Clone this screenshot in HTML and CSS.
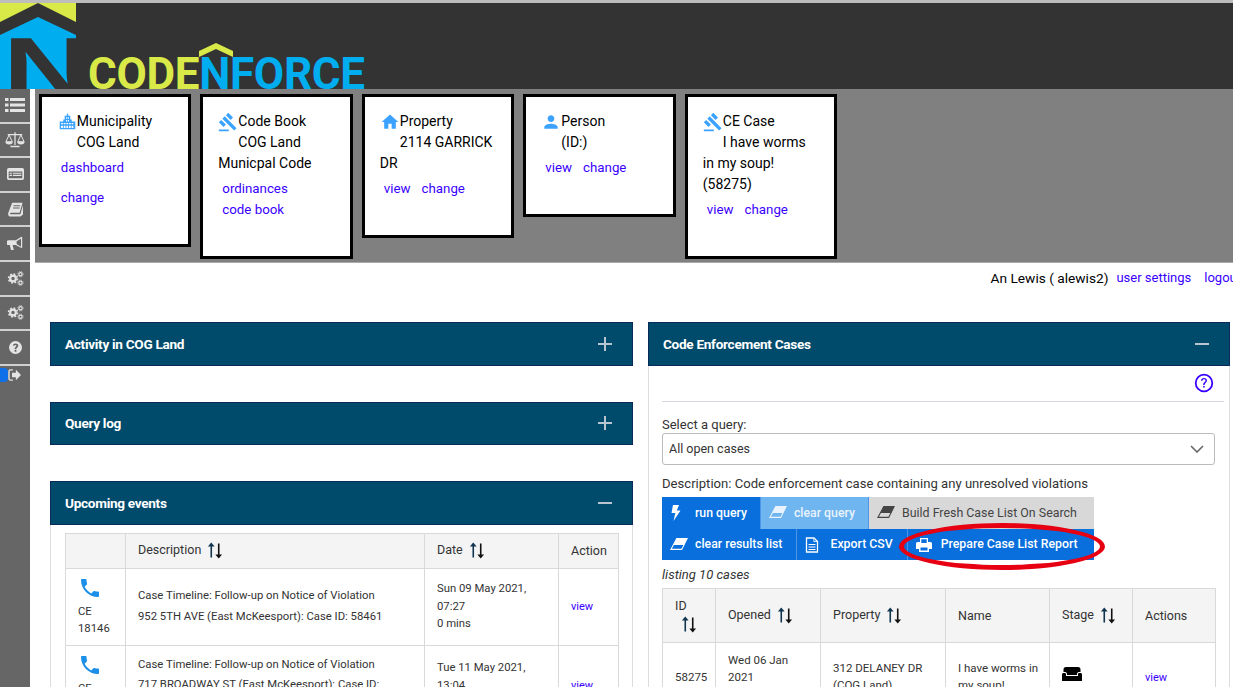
FILE: index.html
```html
<!DOCTYPE html>
<html lang="en">
  <head>
    <meta charset="UTF-8" />
    <title>CodeNForce</title>
    <link rel="stylesheet" href="styles.css">
  </head>
  <body>
    <svg class="icon-defs" width="0" height="0">
      <symbol id="i-gavel" viewBox="0 0 24 24"><path d="M1 21h12v2H1zM5.245 8.070l2.830-2.827 14.140 14.142-2.828 2.828zM12.317 1l5.657 5.656-2.830 2.830-5.654-5.660zM3.825 9.485l5.657 5.657-2.828 2.828-5.657-5.657z"/></symbol>
      <symbol id="i-home" viewBox="0 0 24 24"><path d="M10 20v-6h4v6h5v-8h3L12 3 2 12h3v8z"/></symbol>
      <symbol id="i-person" viewBox="0 0 24 24"><path d="M12 12c2.210 0 4-1.790 4-4s-1.790-4-4-4-4 1.790-4 4 1.790 4 4 4zm0 2c-2.670 0-8 1.340-8 4v2h16v-2c0-2.660-5.330-4-8-4z"/></symbol>
      <symbol id="i-city" viewBox="0 0 24 24"><path fill-rule="evenodd" d="M11 1h2v3h3v5h2v3h5v11H1V12h5V9h2V4h3zM10 6v2h1.500V6zm2.500 0v2H14V6zM10 10v2h1.500v-2zm2.500 0v2H14v-2zM3 14v2h2.500v-2zm3.700 0v2h2.500v-2zm3.700 0v2h2.500v-2zm3.700 0v2h2.500v-2zm3.700 0v2h2.500v-2zM3 18v3h2.500v-3zm3.700 0v3h2.500v-3zm3.700 0v3h2.500v-3zm3.700 0v3h2.500v-3zm3.700 0v3h2.500v-3z"/></symbol>
      <symbol id="i-phone" viewBox="0 0 24 24"><path d="M6.620 10.790c1.440 2.830 3.760 5.140 6.590 6.590l2.200-2.200c.27-.27.67-.36 1.020-.24 1.120.37 2.330.57 3.570.57.55 0 1 .45 1 1V20c0 .55-.45 1-1 1-9.390 0-17-7.610-17-17 0-.55.45-1 1-1h3.500c.55 0 1 .45 1 1 0 1.250.2 2.450.57 3.570.11.35.03.74-.25 1.020l-2.200 2.200z"/></symbol>
      <symbol id="i-sort" viewBox="0 0 18 20"><path fill="#12364f" d="M4.800 1 1 5.600h2.900V18h1.800V5.600h2.900z"/><path fill="#111" d="M13.200 19 17 14.400h-2.900V2h-1.800v12.400H9.400z"/></symbol>
      <symbol id="i-eraser" viewBox="0 0 20 14"><path d="M7.500 1h11.500l-6 12H1z" fill="none" stroke="currentColor" stroke-width="1.200"/><path d="M7.500 1h11.500l-3.500 7H4z"/></symbol>
      <symbol id="i-bolt" viewBox="0 0 12 16"><path d="M3 0h6L6.800 5.500H10.500L3.500 16l1.800-8H1.500z"/></symbol>
      <symbol id="i-file" viewBox="0 0 14 16"><path d="M1.500 1h7.500l3.500 3.500V15h-11z" fill="none" stroke="currentColor" stroke-width="1.300"/><path d="M3.500 7h7v1h-7zM3.500 9.500h7v1h-7zM3.500 12h7v1h-7zM8.500 1.500v3.500h3.500v-.8H9.300V1.500z"/></symbol>
      <symbol id="i-print" viewBox="0 0 16 16"><path fill-rule="evenodd" d="M4 1h8v4h2.500A1.500 1.500 0 0 1 16 6.500V12h-3v3H3v-3H0V6.500A1.500 1.500 0 0 1 1.500 5H4zm1.300 1.300V6h5.400V2.300zM4.500 10.500v3h7v-3z"/></symbol>
      <symbol id="i-cogs" viewBox="0 0 24 24"><circle cx="8.500" cy="12" r="4" fill="none" stroke="currentColor" stroke-width="3"/><circle cx="8.500" cy="12" r="6.300" fill="none" stroke="currentColor" stroke-width="2.200" stroke-dasharray="2.500 2.450"/><circle cx="19" cy="6" r="2.300" fill="none" stroke="currentColor" stroke-width="1.600"/><circle cx="19" cy="6" r="3.800" fill="none" stroke="currentColor" stroke-width="1.200" stroke-dasharray="1.500 1.480"/><circle cx="19" cy="18" r="2.300" fill="none" stroke="currentColor" stroke-width="1.600"/><circle cx="19" cy="18" r="3.800" fill="none" stroke="currentColor" stroke-width="1.200" stroke-dasharray="1.500 1.480"/></symbol>
    </svg>

    <div class="page">
      <header class="topbar">
        <svg class="logo-mark" viewBox="0 0 76 86" width="76" height="86">
          <rect width="76" height="86" fill="#333" />
          <path d="M0 0h76v19L38 0 0 19z" fill="#d9ea48" />
          <path d="M38 14 76 32v54H0V32z" fill="#00adef" />
          <text class="logo-n" transform="translate(3 94) scale(1.42 1)">N</text>
        </svg>
        <div class="logo-word">
          <span class="logo-code">CODE</span><span class="logo-force">NFORCE</span>
          <svg class="logo-roof" viewBox="0 0 36 16" width="36" height="16">
            <path d="M1 15V9L18 1l17 8v6L18 7z" fill="#d9ea48" />
          </svg>
        </div>
      </header>

      <div class="workspace">
        <nav class="sidenav">
          <a class="nav-item"><svg width="20" height="16" viewBox="0 0 20 16"><path d="M0 1h3.500v3H0zM5 1h15v3H5zM0 6.500h3.500v3H0zM5 6.500h15v3H5zM0 12h3.500v3H0zM5 12h15v3H5z"/></svg></a>
          <a class="nav-item"><svg width="20" height="17" viewBox="0 0 22 18"><path d="M10.300 1h1.400v14h-1.400zM3 3h16v1.300H3zM6 16h10v1.500H6z"/><path d="M4.500 4 1 11.500h7zM17.500 4 14 11.500h7z" fill="none" stroke="currentColor" stroke-width="1.100"/><path d="M.5 11.500h8a4 3 0 0 1-8 0zM13.500 11.500h8a4 3 0 0 1-8 0z"/></svg></a>
          <a class="nav-item"><svg width="17" height="14" viewBox="0 0 20 16"><path fill-rule="evenodd" d="M2 1h16a2 2 0 0 1 2 2v10a2 2 0 0 1-2 2H2a2 2 0 0 1-2-2V3a2 2 0 0 1 2-2zm0 4v8h16V5zM3 6.500h3v1.300H3zM7 6.500h10v1.300H7zM3 9h3v1.300H3zM7 9h10v1.300H7z"/></svg></a>
          <a class="nav-item"><svg width="15" height="15" viewBox="0 0 18 18"><path fill-rule="evenodd" d="M5 1h12.500l-3.600 12H3.500c-1.200 0-1.500 1.700-.2 1.700h11.500L18 4v11l-3 2.500H3C.5 17.500-.4 15 .5 12.500zM6.500 4v1.200h8V4zM6 6.500v1.200h8V6.500z"/></svg></a>
          <a class="nav-item"><svg width="16" height="15" viewBox="0 0 20 18"><path fill-rule="evenodd" d="M19 1v13l-1 .5L11 11H7l1.500 6H5L3.500 11H2a2 2 0 0 1 0-6h9l7-4.500zM17.500 3 12 6.300v3.400l5.500 3.300z"/></svg></a>
          <a class="nav-item"><svg width="17" height="17"><use href="#i-cogs" /></svg></a>
          <a class="nav-item"><svg width="17" height="17"><use href="#i-cogs" /></svg></a>
          <a class="nav-item"><svg width="13" height="13" viewBox="0 0 16 16"><path fill-rule="evenodd" d="M8 0a8 8 0 1 1 0 16A8 8 0 0 1 8 0zM6.900 11.200v2h2.200v-2zM8 3C6.200 3 5 4 4.700 5.400l1.900.5C6.800 5.200 7.200 4.800 8 4.800c.7 0 1.200.4 1.200 1 0 1.200-2.300 1.400-2.300 3.700v.5h2.200v-.4c0-1.300 2.300-1.700 2.300-3.900C11.400 4.100 9.900 3 8 3z"/></svg></a>
          <a class="nav-item nav-item-last">
            <span class="nav-pill"></span>
            <svg width="14" height="12" viewBox="0 0 16 14"><path d="M5.500 1H3a2 2 0 0 0-2 2v8a2 2 0 0 0 2 2h2.500" fill="none" stroke="currentColor" stroke-width="1.600"/><path d="M4.500 4.500H9V1l6 6-6 6V9.500H4.500z"/></svg>
          </a>
        </nav>

        <main class="content">
          <section class="context-band">
            <div class="ctx-card">
              <p class="ctx-title"><svg class="ctx-icon ctx-icon-city" width="17" height="17"><use href="#i-city" /></svg>Municipality</p>
              <p class="ctx-name">COG Land</p>
              <a class="ctx-link ctx-link-first" href="#">dashboard</a>
              <a class="ctx-link ctx-link-spaced" href="#">change</a>
            </div>
            <div class="ctx-card">
              <p class="ctx-title"><svg class="ctx-icon" width="20" height="20"><use href="#i-gavel" /></svg>Code Book</p>
              <p class="ctx-name">COG Land Municpal Code</p>
              <a class="ctx-link ctx-link-first" href="#">ordinances</a>
              <a class="ctx-link" href="#">code book</a>
            </div>
            <div class="ctx-card">
              <p class="ctx-title"><svg class="ctx-icon" width="20" height="20"><use href="#i-home" /></svg>Property</p>
              <p class="ctx-name">2114 GARRICK DR</p>
              <div class="ctx-links"><a href="#">view</a><a href="#">change</a></div>
            </div>
            <div class="ctx-card">
              <p class="ctx-title"><svg class="ctx-icon" width="20" height="20"><use href="#i-person" /></svg>Person</p>
              <p class="ctx-name">(ID:)</p>
              <div class="ctx-links"><a href="#">view</a><a href="#">change</a></div>
            </div>
            <div class="ctx-card">
              <p class="ctx-title"><svg class="ctx-icon" width="20" height="20"><use href="#i-gavel" /></svg>CE Case</p>
              <p class="ctx-name">I have worms in my soup! (58275)</p>
              <div class="ctx-links"><a href="#">view</a><a href="#">change</a></div>
            </div>
          </section>

          <div class="user-row">
            <span class="user-name">An Lewis ( alewis2)</span>
            <a href="#">user settings</a>
            <a class="user-logout" href="#">logout</a>
          </div>

          <div class="columns">
            <div class="column">
              <section class="panel">
                <div class="panel-head"><h2>Activity in COG Land</h2><span class="toggle toggle-plus"></span></div>
              </section>
              <section class="panel">
                <div class="panel-head"><h2>Query log</h2><span class="toggle toggle-plus"></span></div>
              </section>
              <section class="panel">
                <div class="panel-head"><h2>Upcoming events</h2><span class="toggle"></span></div>
                <div class="panel-body panel-body-events">
                  <table class="data-table events-table">
                    <colgroup><col class="ev-a"><col class="ev-b"><col class="ev-c"><col class="ev-d"></colgroup>
                    <thead>
                      <tr>
                        <th></th>
                        <th>Description<svg class="sort" width="16" height="19"><use href="#i-sort" /></svg></th>
                        <th>Date<svg class="sort" width="16" height="19"><use href="#i-sort" /></svg></th>
                        <th>Action</th>
                      </tr>
                    </thead>
                    <tbody>
                      <tr class="ev-row">
                        <td class="ev-kind"><svg class="phone" width="24" height="24"><use href="#i-phone" /></svg><div>CE 18146</div></td>
                        <td class="ev-desc">Case Timeline: Follow-up on Notice of Violation<br>952 5TH AVE (East McKeesport): Case ID: 58461</td>
                        <td>Sun 09 May 2021, 07:27<br>0 mins</td>
                        <td><a class="small-link" href="#">view</a></td>
                      </tr>
                      <tr class="ev-row ev-row-tall">
                        <td class="ev-kind"><svg class="phone" width="24" height="24"><use href="#i-phone" /></svg><div>CE 18147</div></td>
                        <td class="ev-desc">Case Timeline: Follow-up on Notice of Violation<br>717 BROADWAY ST (East McKeesport): Case ID:<br>58462</td>
                        <td>Tue 11 May 2021, 13:04<br>0 mins</td>
                        <td><a class="small-link" href="#">view</a></td>
                      </tr>
                    </tbody>
                  </table>
                </div>
              </section>
            </div>

            <div class="column">
              <section class="panel">
                <div class="panel-head"><h2>Code Enforcement Cases</h2><span class="toggle"></span></div>
                <div class="panel-body panel-body-cases">
                  <div class="help-row">
                    <svg width="20" height="20" viewBox="0 0 20 20"><circle cx="10" cy="10" r="8.300" fill="none" stroke="currentColor" stroke-width="1.800"/><path d="M7 7.800C7 6 8.300 5 10 5c1.800 0 3 1 3 2.600 0 2.300-2.400 2.300-2.400 4.400H9.200c0-2.800 2.300-2.800 2.300-4.400 0-.8-.6-1.300-1.500-1.300-.9 0-1.500.6-1.600 1.500zM9.100 13h1.600v1.600H9.100z"/></svg>
                  </div>
                  <label class="query-label" for="query">Select a query:</label>
                  <div class="query-select" id="query">
                    <span>All open cases</span>
                    <svg width="14" height="8" viewBox="0 0 14 8"><path d="M1 1l6 6 6-6" fill="none" stroke="#666" stroke-width="1.600"/></svg>
                  </div>
                  <p class="query-desc">Description: Code enforcement case containing any unresolved violations</p>
                  <div class="btn-group">
                    <div class="btn-row">
                      <a class="btn"><svg width="12" height="16"><use href="#i-bolt" /></svg>run query</a>
                      <a class="btn btn-light"><svg width="18" height="14"><use href="#i-eraser" /></svg>clear query</a>
                      <a class="btn btn-grey"><svg width="18" height="14"><use href="#i-eraser" /></svg>Build Fresh Case List On Search</a>
                    </div>
                    <div class="btn-row">
                      <a class="btn"><svg width="18" height="14"><use href="#i-eraser" /></svg>clear results list</a>
                      <a class="btn"><svg width="14" height="16"><use href="#i-file" /></svg>Export CSV</a>
                      <a class="btn"><svg width="16" height="16"><use href="#i-print" /></svg>Prepare Case List Report</a>
                    </div>
                    <span class="red-ring"></span>
                  </div>
                  <p class="listing">listing 10 cases</p>
                  <table class="data-table cases-table">
                    <colgroup><col class="cs-a"><col class="cs-b"><col class="cs-c"><col class="cs-d"><col class="cs-e"><col class="cs-f"></colgroup>
                    <thead>
                      <tr>
                        <th>ID<br><svg class="sort" width="16" height="19"><use href="#i-sort" /></svg></th>
                        <th>Opened<svg class="sort" width="16" height="19"><use href="#i-sort" /></svg></th>
                        <th>Property<svg class="sort" width="16" height="19"><use href="#i-sort" /></svg></th>
                        <th>Name</th>
                        <th>Stage<svg class="sort" width="16" height="19"><use href="#i-sort" /></svg></th>
                        <th>Actions</th>
                      </tr>
                    </thead>
                    <tbody>
                      <tr>
                        <td>58275</td>
                        <td>Wed 06 Jan 2021<br>&nbsp;</td>
                        <td>312 DELANEY DR (COG Land)</td>
                        <td>I have worms in my soup!</td>
                        <td><svg class="couch" width="20" height="14" viewBox="0 0 20 14"><path d="M4 0h12a2.500 2.500 0 0 1 2.500 2.500V5h-2a2 2 0 0 0-1.500 1.800V8H5V6.800A2 2 0 0 0 3.500 5h-2V2.500A2.500 2.500 0 0 1 4 0zM1.500 6h1.300C3.500 6 4 6.500 4 7.200V9h12V7.200c0-.7.500-1.200 1.200-1.200h1.300c.8 0 1.500.7 1.500 1.500V14H0V7.500C0 6.700.7 6 1.500 6z"/></svg></td>
                        <td><a class="small-link" href="#">view</a></td>
                      </tr>
                    </tbody>
                  </table>
                </div>
              </section>
            </div>
          </div>
        </main>
      </div>
    </div>
  </body>
</html>
```

FILE: styles.css
```css
html, body {
  margin: 0;
  height: 100%;
  overflow: hidden;
}

body {
  font-family: Roboto, "Liberation Sans", sans-serif;
  font-size: 14px;
  color: #000;
  background: #fff;
}

a {
  color: #3a00ff;
  text-decoration: none;
}

p {
  margin: 0;
}

.icon-defs {
  position: absolute;
}

.page {
  height: 100vh;
  display: flex;
  flex-direction: column;
  overflow: hidden;
}

/* header */
.topbar {
  flex: none;
  height: 86px;
  border-top: 3px solid #bdbdbd;
  background: #333;
  display: flex;
  overflow: hidden;
}

.logo-mark {
  flex: none;
  display: block;
}

.logo-n {
  font-family: "Liberation Sans", sans-serif;
  font-weight: 700;
  font-size: 85px;
  fill: #333;
}

.logo-word {
  position: relative;
  margin: 54px 0 0 12px;
  font-weight: 700;
  font-size: 44px;
  line-height: 34px;
  letter-spacing: -0.3px;
  white-space: nowrap;
  height: 32px;
}

.logo-code {
  color: #d9ea48;
}

.logo-force {
  color: #00adef;
}

.logo-roof {
  position: absolute;
  left: 110px;
  top: -15px;
}

/* left nav + content */
.workspace {
  flex: 1;
  display: flex;
  min-height: 0;
}

.sidenav {
  flex: none;
  width: 30px;
  background: #666;
  margin-right: 5px;
}

.nav-item {
  box-sizing: border-box;
  height: 34.6px;
  border-bottom: 2px solid #d0d0d0;
  display: flex;
  align-items: center;
  justify-content: center;
  color: #e4e4e4;
}

.nav-item svg {
  fill: currentColor;
}

.nav-item-last {
  border-bottom: 0;
  height: 22px;
  position: relative;
}

.nav-pill {
  position: absolute;
  left: 0;
  top: 2px;
  width: 8px;
  height: 14px;
  background: #0f6fe8;
  border-radius: 0 4px 4px 0;
}

.nav-item-last svg {
  margin: -4px 0 0 0;
  position: relative;
}

.content {
  flex: 1;
  min-width: 0;
  overflow: hidden;
}

/* context cards */
.context-band {
  height: 174px;
  box-sizing: border-box;
  background: #808080;
  border-bottom: 1px solid #aaa;
  padding: 5px 3.800px;
  display: flex;
  align-items: flex-start;
  gap: 9px;
}

.ctx-card {
  flex: none;
  box-sizing: border-box;
  width: 152.500px;
  border: 3px solid #000;
  background: #fff;
  padding: 14px 16px 36px 15px;
  line-height: 21px;
  font-size: 14px;
}

.ctx-title {
  padding-left: 20px;
  position: relative;
}

.ctx-name {
  text-indent: 20px;
}

.ctx-icon {
  position: absolute;
  left: 0;
  top: 1px;
  fill: #3ba3ff;
}

.ctx-icon-city {
  left: 2px;
  top: 2px;
}

.ctx-card a {
  font-size: 13.300px;
}

.ctx-link {
  display: block;
  padding-left: 4px;
}

.ctx-link-first {
  margin-top: 4px;
}

.ctx-link-spaced {
  margin-top: 9px;
}

.ctx-links {
  margin-top: 4px;
  padding-left: 4px;
  display: flex;
  gap: 11px;
}

/* user line */
.user-row {
  height: 59px;
  box-sizing: border-box;
  padding-top: 6px;
  margin-right: -8px;
  display: flex;
  justify-content: flex-end;
  gap: 8px;
  white-space: nowrap;
  font-size: 13px;
  line-height: 18px;
}

.user-name {
  font-size: 13.700px;
}

.user-logout {
  margin-left: 5px;
}

/* panels */
.columns {
  display: grid;
  grid-template-columns: 583px 582px;
  gap: 15px;
  padding-left: 15px;
}

.panel {
  margin-bottom: 36px;
}

.panel-head {
  box-sizing: border-box;
  height: 43.500px;
  background: #004a6b;
  border: 1px solid #0b2a5c;
  color: #fff;
  padding: 0 20px 0 14px;
  display: flex;
  align-items: center;
  justify-content: space-between;
}

.panel-head h2 {
  margin: 0;
  font-size: 13.600px;
  font-weight: 700;
  letter-spacing: -0.3px;
}

.toggle {
  position: relative;
  width: 14px;
  height: 14px;
}

.toggle::before,
.toggle-plus::after {
  content: "";
  position: absolute;
  background: #b9c6d0;
}

.toggle::before {
  left: 0;
  right: 0;
  top: 6px;
  height: 2px;
}

.toggle-plus::after {
  top: 0;
  bottom: 0;
  left: 6px;
  width: 2px;
}

.panel-body {
  border: 1px solid #ddd;
  border-top: 0;
}

.panel-body-events {
  padding: 8px 14px 14px;
}

.panel-body-cases {
  padding: 0 14px 14px 13px;
}

/* tables */
.data-table {
  border-collapse: collapse;
  table-layout: fixed;
  font-size: 12px;
  color: #333;
}

.data-table th,
.data-table td {
  border: 1px solid #d9d9d9;
  padding: 0 9px 0 12px;
  text-align: left;
}

.data-table th {
  background: #f4f4f4;
  font-weight: 400;
  font-size: 12.500px;
  height: 34px;
}

.sort {
  vertical-align: middle;
  margin-left: 6px;
}

.small-link {
  font-size: 11px;
}

.events-table {
  width: 553px;
}

.ev-a { width: 60px; }
.ev-b { width: 299px; }
.ev-c { width: 134px; }
.ev-d { width: 60px; }

.ev-row td {
  height: 76px;
  line-height: 17.500px;
  font-size: 11.300px;
}

.ev-row-tall td {
  height: 80px;
}

.ev-row .ev-kind {
  height: auto;
  vertical-align: top;
  padding-top: 7px;
}

.ev-row .ev-desc {
  font-size: 11.300px;
  line-height: 20.500px;
}

.phone {
  display: block;
  fill: #1c8fe8;
  margin-bottom: 3px;
}

.cases-table {
  width: 553px;
}

.cs-a { width: 53px; }
.cs-b { width: 105px; }
.cs-c { width: 125px; }
.cs-d { width: 104px; }
.cs-e { width: 83px; }
.cs-f { width: 83px; }

.cases-table th {
  height: 53px;
  line-height: 18px;
}

.cases-table td {
  height: 68px;
  font-size: 11.500px;
  line-height: 17px;
}

.couch {
  display: block;
  margin-top: -6px;
}

/* query form */
.help-row {
  height: 35px;
  margin-right: -9px;
  border-bottom: 1px solid #d5d5e0;
  color: #3a00ff;
  display: flex;
  justify-content: flex-end;
  align-items: center;
  padding-right: 10px;
  fill: #3a00ff;
}

.query-label {
  display: block;
  margin-top: 15px;
  font-size: 13px;
  line-height: 16px;
  color: #333;
}

.query-select {
  box-sizing: border-box;
  height: 32px;
  border: 1px solid #bbb;
  border-radius: 3px;
  padding: 0 10px 0 6px;
  font-size: 12.500px;
  color: #333;
  display: flex;
  align-items: center;
  justify-content: space-between;
}

.query-desc {
  margin-top: 11px;
  font-size: 13.100px;
  line-height: 16px;
  color: #333;
}

.btn-group {
  position: relative;
  margin-top: 5.500px;
  width: 432px;
}

.btn-row {
  display: flex;
}

.btn {
  flex: none;
  box-sizing: border-box;
  height: 31.500px;
  background: #086fdc;
  color: #fff;
  fill: #fff;
  display: flex;
  align-items: center;
  font-size: 12.300px;
  font-weight: 500;
  position: relative;
  padding: 0 13px 0 33px;
  white-space: nowrap;
  border-right: 1px solid #4d95e8;
}

.btn:last-of-type {
  flex: 1;
  border-right: 0;
}

.btn-row + .btn-row .btn {
  padding-right: 14px;
}

.btn svg {
  position: absolute;
  left: 8px;
  top: 8px;
}

.btn-light {
  background: #6fb5ef;
  color: #e8f3fd;
  fill: #e8f3fd;
}

.btn-grey {
  background: #d8d8d8;
  color: #444;
  fill: #444;
  font-weight: 400;
  font-size: 12.400px;
}

.red-ring {
  position: absolute;
  left: 237px;
  top: 26px;
  width: 196px;
  height: 37px;
  border: 5px solid #e60012;
  border-radius: 50%;
}

.listing {
  margin-top: 7px;
  font-style: italic;
  font-size: 13px;
  line-height: 16px;
  color: #333;
  margin-bottom: 5px;
}
```
